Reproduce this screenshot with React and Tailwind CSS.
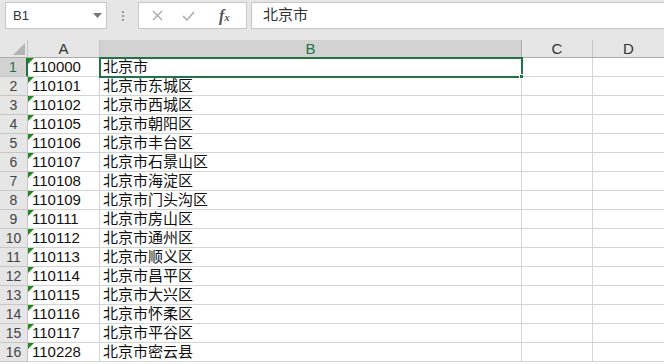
import React from "react";

const rows = [
  ["110000", "北京市"],
  ["110101", "北京市东城区"],
  ["110102", "北京市西城区"],
  ["110105", "北京市朝阳区"],
  ["110106", "北京市丰台区"],
  ["110107", "北京市石景山区"],
  ["110108", "北京市海淀区"],
  ["110109", "北京市门头沟区"],
  ["110111", "北京市房山区"],
  ["110112", "北京市通州区"],
  ["110113", "北京市顺义区"],
  ["110114", "北京市昌平区"],
  ["110115", "北京市大兴区"],
  ["110116", "北京市怀柔区"],
  ["110117", "北京市平谷区"],
  ["110228", "北京市密云县"],
];

const font = { fontFamily: '"Liberation Sans", "Noto Sans CJK SC", sans-serif' };

const FormulaBar = () => (
  <div className="flex h-[40px] items-start bg-[#e6e6e6] pt-[2px]">
    {/* name box */}
    <div className="ml-[5px] flex h-[27px] w-[102px] items-center justify-between border border-[#c6c6c6] bg-white pl-[7px] pr-[4px]">
      <span className="text-[13px] text-[#333]">B1</span>
      <svg width="9" height="5" viewBox="0 0 9 5">
        <path d="M0 0h9L4.5 5z" fill="#777" />
      </svg>
    </div>
    <div className="flex h-[27px] w-[31px] flex-col items-center justify-center gap-[2px]">
      <span className="h-[2px] w-[2px] bg-[#9a9a9a]" />
      <span className="h-[2px] w-[2px] bg-[#9a9a9a]" />
      <span className="h-[2px] w-[2px] bg-[#9a9a9a]" />
    </div>
    {/* cancel / enter / fx */}
    <div className="flex h-[27px] w-[109px] items-center border border-[#c6c6c6] bg-white">
      <svg className="ml-[13px]" width="11" height="11" viewBox="0 0 11 11">
        <path d="M1 1l9 9M10 1l-9 9" stroke="#a9a9a9" strokeWidth="1.3" />
      </svg>
      <svg className="ml-[19px]" width="13" height="10" viewBox="0 0 13 10">
        <path d="M1 5l4 4 7-8" stroke="#a9a9a9" strokeWidth="1.5" fill="none" />
      </svg>
      <span
        className="ml-[24px] text-[16px] font-bold italic text-[#555]"
        style={{ fontFamily: '"Liberation Serif", serif' }}
      >
        f<span className="text-[11px]">x</span>
      </span>
    </div>
    <div className="ml-[4px] flex h-[27px] flex-1 items-center border border-[#c6c6c6] border-r-0 bg-white pl-[11px]">
      <span className="text-[15px] text-[#333]">北京市</span>
    </div>
  </div>
);

const ColHeader = () => (
  <div className="flex h-[18px] border-b border-[#ababab] bg-[#e6e6e6] text-[15px] leading-[17px] text-[#333]">
    <div className="relative w-[28px] border-r border-[#c6c6c6]">
      <svg className="absolute bottom-[2px] right-[2px]" width="12" height="12" viewBox="0 0 12 12">
        <path d="M12 0v12H0z" fill="#b4b4b4" />
      </svg>
    </div>
    <div className="w-[72px] border-r border-[#c6c6c6] text-center">A</div>
    <div className="w-[422px] border-r border-[#ababab] bg-[#d2d2d2] text-center text-[#217346]">B</div>
    <div className="w-[71px] border-r border-[#c6c6c6] text-center">C</div>
    <div className="flex-1 text-center">D</div>
  </div>
);

const Row = ({ n, code, name }) => {
  const sel = n === 1;
  return (
    <div className="flex h-[19px] text-[15px] leading-[18px]">
      <div
        className={
          sel
            ? "w-[28px] border-b border-r-2 border-b-[#c6c6c6] border-r-[#217346] bg-[#d2d2d2] text-center text-[14px] text-[#217346]"
            : "w-[28px] border-b border-r border-[#c6c6c6] bg-[#e6e6e6] text-center text-[14px] text-[#444]"
        }
      >
        {n}
      </div>
      <div className="relative w-[72px] border-b border-r border-[#d4d4d4] pl-[4px] text-[#111]">
        <svg className="absolute left-0 top-0" width="6" height="6" viewBox="0 0 6 6">
          <path d="M0 0h6L0 6z" fill="#1d8a1d" />
        </svg>
        {code}
      </div>
      <div className="w-[422px] border-b border-r border-[#d4d4d4] pl-[3px] text-[#111]">{name}</div>
      <div className="w-[71px] border-b border-r border-[#d4d4d4]" />
      <div className="flex-1 border-b border-[#d4d4d4]" />
    </div>
  );
};

export default function App() {
  return (
    <div className="h-[364px] w-[664px] overflow-hidden bg-white" style={font}>
      <FormulaBar />
      <ColHeader />
      <div className="relative">
        {rows.map(([code, name], i) => (
          <Row key={code} n={i + 1} code={code} name={name} />
        ))}
        {/* active cell B1 */}
        <div className="pointer-events-none absolute left-[99px] top-[-1px] h-[21px] w-[424px] border-2 border-[#217346]" />
        <div className="pointer-events-none absolute left-[519px] top-[16px] h-[5px] w-[5px] border border-white bg-[#217346]" />
      </div>
    </div>
  );
}
